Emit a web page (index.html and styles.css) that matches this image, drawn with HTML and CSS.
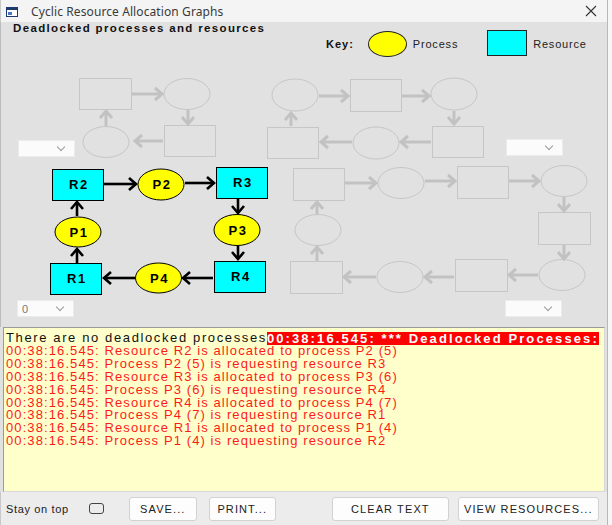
FILE: index.html
```html
<!DOCTYPE html>
<html>
<head>
<meta charset="utf-8">
<link rel="stylesheet" href="styles.css">
</head>
<body>
<div class="window">
  <div class="titlebar">
    <svg class="app-icon" width="12" height="10" viewBox="0 0 12 10">
      <rect x="0.5" y="0.5" width="11" height="9" fill="#fff" stroke="#1f3b6e"/>
      <rect x="0.5" y="0.5" width="11" height="2.5" fill="#1f3b6e"/>
      <rect x="2" y="5" width="4" height="3" fill="#4a78c2"/>
    </svg>
    <span class="title">Cyclic Resource Allocation Graphs</span>
    <svg class="close" width="12" height="12" viewBox="0 0 12 12">
      <path d="M1 1 L11 11 M11 1 L1 11" stroke="#333" stroke-width="1.1" fill="none"/>
    </svg>
  </div>

  <div class="canvas">
    <div class="canvas-head">
      <div class="heading">Deadlocked processes and resources</div>
      <div class="key">
        <span class="key-label">Key:</span>
        <span class="key-proc"></span>
        <span class="key-text key-text-proc">Process</span>
        <span class="key-res"></span>
        <span class="key-text">Resource</span>
      </div>
    </div>

    <svg class="graph" width="607" height="304" viewBox="0 22 607 304">
      <defs>
        <marker id="hg" markerUnits="userSpaceOnUse" markerWidth="14" markerHeight="16" refX="10" refY="8" orient="auto">
          <path d="M3 2 L10 8 L3 14" fill="none" stroke="#c2c2c2" stroke-width="3"/>
        </marker>
        <marker id="hk" markerUnits="userSpaceOnUse" markerWidth="14" markerHeight="16" refX="10" refY="8" orient="auto">
          <path d="M3 2 L10 8 L3 14" fill="none" stroke="#000" stroke-width="2.6"/>
        </marker>
      </defs>

      <!-- gray graph 1 (top-left) -->
      <g class="ghost">
        <rect x="78.5" y="78.5" width="52" height="31"/>
        <ellipse cx="186" cy="94" rx="23" ry="15.5"/>
        <rect x="163.5" y="125.5" width="51" height="31"/>
        <ellipse cx="105" cy="142" rx="23" ry="15.5"/>
      </g>
      <g class="ghost-arrows">
        <path d="M131 94 L161 94"/>
        <path d="M187 110 L187 124"/>
        <path d="M162 141 L134 141"/>
        <path d="M105 126 L105 111"/>
      </g>

      <!-- gray graph 2 (top-right) -->
      <g class="ghost">
        <ellipse cx="294" cy="95" rx="23" ry="16"/>
        <rect x="349.5" y="79.5" width="51" height="32"/>
        <ellipse cx="453" cy="94" rx="23" ry="16"/>
        <rect x="431.5" y="126.5" width="51" height="31"/>
        <ellipse cx="375" cy="143" rx="23" ry="16"/>
        <rect x="266.5" y="127.5" width="51" height="31"/>
      </g>
      <g class="ghost-arrows">
        <path d="M318 96 L347 96"/>
        <path d="M401 96 L428 96"/>
        <path d="M453 111 L453 124"/>
        <path d="M430 142 L400 142"/>
        <path d="M351 142 L320 142"/>
        <path d="M290 126 L290 113"/>
      </g>

      <!-- gray graph 3 (right middle) -->
      <g class="ghost">
        <rect x="292.5" y="168.5" width="51" height="32"/>
        <ellipse cx="400" cy="183" rx="23" ry="15.5"/>
        <rect x="456.5" y="166.5" width="51" height="32"/>
        <ellipse cx="563" cy="181" rx="23" ry="15.5"/>
        <rect x="537.5" y="212.5" width="52" height="32"/>
        <ellipse cx="561" cy="275" rx="23" ry="15.5"/>
        <rect x="454.5" y="259.5" width="52" height="32"/>
        <ellipse cx="399" cy="277" rx="23" ry="15.5"/>
        <rect x="289.5" y="261.5" width="52" height="32"/>
        <ellipse cx="317" cy="230" rx="23" ry="15.5"/>
      </g>
      <g class="ghost-arrows">
        <path d="M344 183 L375 183"/>
        <path d="M424 181 L454 181"/>
        <path d="M508 181 L538 181"/>
        <path d="M563 197 L563 211"/>
        <path d="M563 245 L563 259"/>
        <path d="M537 275 L508 275"/>
        <path d="M453 277 L424 277"/>
        <path d="M375 277 L343 277"/>
        <path d="M316 261 L316 247"/>
        <path d="M316 214 L316 202"/>
      </g>

      <!-- live deadlock graph -->
      <g class="arrows">
        <path d="M103 184 L135 184"/>
        <path d="M184 183 L213 183"/>
        <path d="M237 199 L237 213"/>
        <path d="M237 246 L237 259"/>
        <path d="M212 278 L182 278"/>
        <path d="M134 278 L103 278"/>
        <path d="M76 263 L76 249"/>
        <path d="M76 216 L76 202"/>
      </g>
      <g class="res">
        <rect x="51.5" y="169.5" width="51" height="31"/>
        <rect x="215.5" y="167.5" width="51" height="31"/>
        <rect x="213.5" y="261.5" width="51" height="31"/>
        <rect x="49.5" y="263.5" width="51" height="31"/>
      </g>
      <g class="proc">
        <ellipse cx="160" cy="184.5" rx="23" ry="15.5"/>
        <ellipse cx="236" cy="230" rx="23" ry="15.5"/>
        <ellipse cx="157.5" cy="278" rx="23" ry="15"/>
        <ellipse cx="77" cy="232" rx="23" ry="15"/>
      </g>
      <g class="lbl">
        <text x="78" y="189">R2</text>
        <text x="161" y="189">P2</text>
        <text x="242" y="187">R3</text>
        <text x="237" y="234.5">P3</text>
        <text x="240" y="281">R4</text>
        <text x="158.5" y="282.5">P4</text>
        <text x="76" y="283">R1</text>
        <text x="78" y="236.5">P1</text>
      </g>
    </svg>

    <div class="dd dd1"><span class="dd-val"></span><span class="chev"></span></div>
    <div class="dd dd2"><span class="dd-val"></span><span class="chev"></span></div>
    <div class="dd dd3"><span class="dd-val">0</span><span class="chev"></span></div>
    <div class="dd dd4"><span class="dd-val"></span><span class="chev"></span></div>
  </div>

  <div class="log">
    <div class="line first"><span class="ok">There are no deadlocked processes</span><span class="hl">00:38:16.545: *** Deadlocked Processes:</span></div>
    <div class="line">00:38:16.545: Resource R2 is allocated to process P2 (5)</div>
    <div class="line">00:38:16.545: Process P2 (5) is requesting resource R3</div>
    <div class="line">00:38:16.545: Resource R3 is allocated to process P3 (6)</div>
    <div class="line">00:38:16.545: Process P3 (6) is requesting resource R4</div>
    <div class="line">00:38:16.545: Resource R4 is allocated to process P4 (7)</div>
    <div class="line">00:38:16.545: Process P4 (7) is requesting resource R1</div>
    <div class="line">00:38:16.545: Resource R1 is allocated to process P1 (4)</div>
    <div class="line">00:38:16.545: Process P1 (4) is requesting resource R2</div>
  </div>

  <div class="bottombar">
    <span class="stay">Stay on top</span>
    <span class="check"></span>
    <button class="btn btn-save">SAVE...</button>
    <button class="btn btn-print">PRINT...</button>
    <button class="btn btn-clear">CLEAR TEXT</button>
    <button class="btn btn-view">VIEW RESOURCES...</button>
  </div>
</div>
</body>
</html>
```

FILE: styles.css
```css
* { box-sizing: border-box; }
html, body { margin: 0; padding: 0; }
body {
  width: 612px;
  height: 525px;
  overflow: hidden;
  background: #f6f6f6;
  font-family: "Liberation Sans", Arial, sans-serif;
}
.window {
  width: 608px;
  height: 525px;
  display: flex;
  flex-direction: column;
  background: #e1e1e1;
  border-right: 1px solid #b8b8b8;
}
.titlebar {
  height: 22px;
  flex: none;
  background: #f4f4f4;
  display: flex;
  align-items: center;
  padding-left: 5px;
  border-left: 1px solid #c8c8c8;
}
.app-icon { flex: none; margin-top: 1px; }
.title {
  font-family: "Noto Sans", "Open Sans", sans-serif;
  font-size: 12px;
  color: #3a3a3a;
  margin-left: 13px;
  letter-spacing: 0.1px;
}
.close { margin-left: auto; margin-right: 10px; }

.canvas {
  position: relative;
  height: 305px;
  flex: none;
  border-left: 1px solid #bdbdbd;
}
.canvas-head {
  position: relative;
  z-index: 1;
  padding-left: 12px;
}
.heading {
  font-weight: bold;
  font-size: 11.5px;
  letter-spacing: 1.35px;
  color: #111;
  line-height: 13px;
}
.key {
  display: flex;
  align-items: center;
  margin-top: -4px;
  padding-left: 313px;
  height: 26px;
}
.key-label {
  font-weight: bold;
  font-size: 11px;
  letter-spacing: 1px;
  margin-right: 14px;
  color: #111;
}
.key-proc {
  width: 39px;
  height: 26px;
  border-radius: 50%;
  background: #ffff00;
  border: 1px solid #222;
  margin-right: 6px;
}
.key-res {
  width: 40px;
  height: 26px;
  background: #00ffff;
  border: 1px solid #222;
  margin-right: 6px;
  margin-top: -2px;
}
.key-text {
  font-size: 11px;
  letter-spacing: 0.8px;
  color: #222;
}
.key-text-proc { margin-right: 29px; }

.graph { position: absolute; left: 0; top: 0; }
.ghost rect, .ghost ellipse { fill: none; stroke: #c6c6c6; stroke-width: 1; }
.ghost-arrows path { fill: none; stroke: #c2c2c2; stroke-width: 3; marker-end: url(#hg); }
.arrows path { fill: none; stroke: #000; stroke-width: 2.6; marker-end: url(#hk); }
.res rect { fill: #00ffff; stroke: #000; stroke-width: 1; }
.proc ellipse { fill: #ffff00; stroke: #000; stroke-width: 1; }
.lbl text {
  font-family: "Liberation Sans", Arial, sans-serif;
  font-weight: bold;
  font-size: 13px;
  letter-spacing: 1.6px;
  text-anchor: middle;
  fill: #000;
}

.dd {
  position: absolute;
  width: 57px;
  height: 17px;
  background: #fbfbfb;
  border: 1px solid #ececec;
  display: flex;
  align-items: center;
  padding-left: 4px;
  font-size: 11px;
  color: #777;
}
.dd-val { flex: 1; }
.chev {
  width: 6px;
  height: 6px;
  border-right: 1px solid #999;
  border-bottom: 1px solid #999;
  transform: rotate(45deg);
  margin-right: 10px;
  margin-top: -4px;
}
.dd1 { left: 17px; top: 118px; }
.dd2 { left: 505px; top: 117px; }
.dd3 { left: 16px; top: 278px; }
.dd4 { left: 504px; top: 278px; }

.log {
  flex: none;
  height: 165px;
  margin-left: 3px;
  margin-right: 2px;
  background: #ffffcc;
  border-top: 1px solid #9a9a9a;
  border-left: 1px solid #9a9a9a;
  border-right: 1px solid #d8d8d8;
  border-bottom: 1px solid #d8d8d8;
  padding: 3px 0 0 2px;
  font-size: 13px;
  letter-spacing: 1.1px;
  color: #ff1a1a;
  line-height: 12.9px;
  white-space: nowrap;
  overflow: hidden;
}
.line { height: 12.9px; }
.line.first { display: flex; align-items: center; height: 14px; }
.ok { color: #111; letter-spacing: 1.62px; }
.hl {
  background: #ff0000;
  color: #fff;
  font-weight: bold;
  letter-spacing: 2.1px;
  padding-right: 0;
  line-height: 13px;
}

.bottombar {
  flex: 1;
  display: flex;
  align-items: center;
  background: #ececec;
  padding-left: 5px;
  border-left: 1px solid #c8c8c8;
}
.stay { font-size: 11px; letter-spacing: 0.65px; color: #222; }
.check {
  width: 15px;
  height: 11px;
  border: 1px solid #444;
  border-radius: 3px;
  margin-left: 20px;
  margin-right: 25px;
}
.btn {
  height: 24px;
  background: #fdfdfd;
  border: 1px solid #d2d2d2;
  border-radius: 3px;
  font-family: "Liberation Sans", Arial, sans-serif;
  font-size: 11px;
  letter-spacing: 1.1px;
  color: #222;
  padding: 0;
}
.btn-save { width: 68px; }
.btn-print { width: 67px; margin-left: 12px; }
.btn-clear { width: 117px; margin-left: 56px; }
.btn-view { width: 141px; margin-left: 9px; }
```
